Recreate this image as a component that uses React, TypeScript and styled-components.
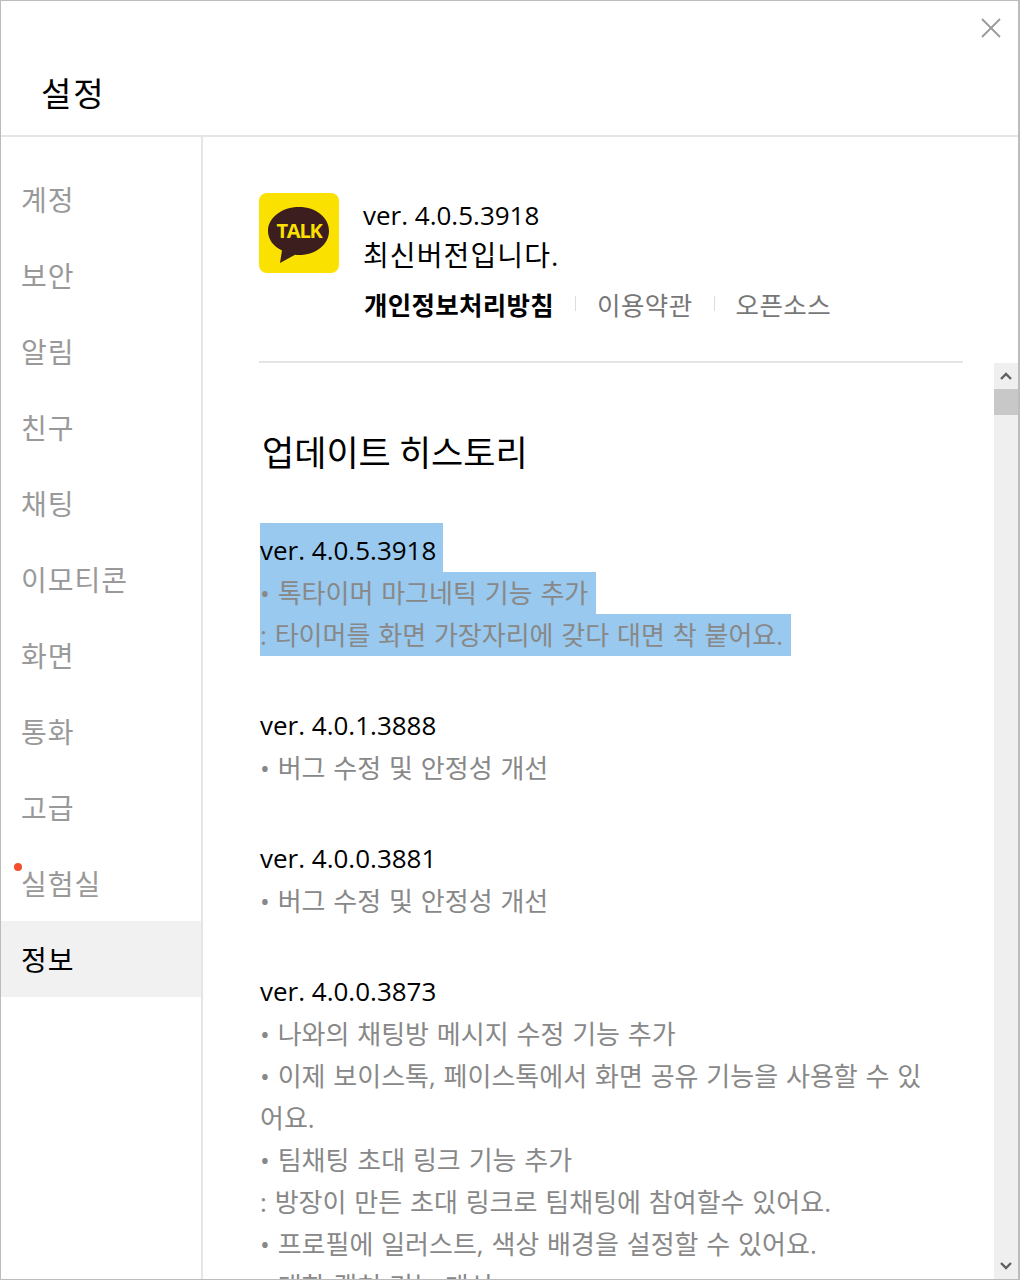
import styled, { createGlobalStyle } from "styled-components";

const menuItems = ["계정", "보안", "알림", "친구", "채팅", "이모티콘", "화면", "통화", "고급", "실험실", "정보"];

const history = [
  {
    version: "ver. 4.0.1.3888",
    lines: ["• 버그 수정 및 안정성 개선"],
  },
  {
    version: "ver. 4.0.0.3881",
    lines: ["• 버그 수정 및 안정성 개선"],
  },
  {
    version: "ver. 4.0.0.3873",
    lines: [
      "• 나와의 채팅방 메시지 수정 기능 추가",
      "• 이제 보이스톡, 페이스톡에서 화면 공유 기능을 사용할 수 있어요.",
      "• 팀채팅 초대 링크 기능 추가",
      ": 방장이 만든 초대 링크로 팀채팅에 참여할수 있어요.",
      "• 프로필에 일러스트, 색상 배경을 설정할 수 있어요.",
      "• 대화 캡처 기능 개선",
    ],
  },
];

export default function App() {
  return (
    <>
      <GlobalStyle />
      <Window>
        <Header>
          <Title>설정</Title>
          <CloseButton aria-label="닫기">
            <svg width="20" height="20" viewBox="0 0 20 20">
              <path d="M1 1 L19 19 M19 1 L1 19" stroke="#9a9a9a" strokeWidth="1.8" fill="none" />
            </svg>
          </CloseButton>
        </Header>
        <Body>
          <Sidebar>
            {menuItems.map((item) => (
              <MenuItem key={item} $active={item === "정보"}>
                {item === "실험실" && <NewDot />}
                {item}
              </MenuItem>
            ))}
          </Sidebar>
          <Main>
            <About>
              <AppIcon width="80" height="80" viewBox="0 0 80 80">
                <rect width="80" height="80" rx="8" fill="#fae100" />
                <path d="M40 14 C23 14 9 24.500 9 38 C9 46.500 14.500 53.500 23 57.500 L21 70 L36 61.800 C37.300 61.900 38.700 62 40 62 C57 62 70 51.500 70 38 C70 24.500 57 14 40 14 Z" fill="#3c1e1e" />
                <LogoText x="40" y="45" textAnchor="middle">TALK</LogoText>
              </AppIcon>
              <AboutText>
                <CurrentVersion>ver. 4.0.5.3918</CurrentVersion>
                <Latest>최신버전입니다.</Latest>
                <Links>
                  <LinkItem $strong>개인정보처리방침</LinkItem>
                  <Separator />
                  <LinkItem>이용약관</LinkItem>
                  <Separator />
                  <LinkItem>오픈소스</LinkItem>
                </Links>
              </AboutText>
            </About>
            <ScrollArea>
              <HistoryContent>
                <HistoryTitle>업데이트 히스토리</HistoryTitle>
                <SelectedBlock>
                  <SelectedVersion>
                    <Mark>ver. 4.0.5.3918&nbsp;</Mark>
                  </SelectedVersion>
                  <SelectedLine>
                    <Mark>• 톡타이머 마그네틱 기능 추가&nbsp;</Mark>
                  </SelectedLine>
                  <SelectedLine>
                    <Mark>: 타이머를 화면 가장자리에 갖다 대면 착 붙어요.&nbsp;</Mark>
                  </SelectedLine>
                </SelectedBlock>
                {history.map((entry) => (
                  <Release key={entry.version}>
                    <Version>{entry.version}</Version>
                    {entry.lines.map((line) => (
                      <Note key={line}>{line}</Note>
                    ))}
                  </Release>
                ))}
              </HistoryContent>
              <Scrollbar>
                <ScrollArrow>
                  <svg width="14" height="10" viewBox="0 0 14 10">
                    <path d="M2 8 L7 3 L12 8" stroke="#606060" strokeWidth="2.400" fill="none" />
                  </svg>
                </ScrollArrow>
                <Thumb />
                <ScrollTrack />
                <ScrollArrow>
                  <svg width="14" height="10" viewBox="0 0 14 10">
                    <path d="M2 2 L7 7 L12 2" stroke="#606060" strokeWidth="2.400" fill="none" />
                  </svg>
                </ScrollArrow>
              </Scrollbar>
            </ScrollArea>
          </Main>
        </Body>
      </Window>
    </>
  );
}

// 스타일 컴포넌트

const fontStack = `"Open Sans", "Noto Sans CJK KR", sans-serif`;

const GlobalStyle = createGlobalStyle`
  html, body {
    margin: 0;
    padding: 0;
    background: #fff;
    overflow: hidden;
  }
  * {
    box-sizing: border-box;
  }
`;

const Window = styled.div`
  display: flex;
  flex-direction: column;
  width: 1020px;
  height: 1280px;
  border: 1px solid #bcbcbc;
  border-right-width: 2px;
  font-family: ${fontStack};
  overflow: hidden;
`;

const Header = styled.header`
  position: relative;
  flex: none;
  height: 136px;
  padding: 68px 0 0 40px;
  border-bottom: 2px solid #e5e5e5;
`;

const Title = styled.h1`
  margin: 0;
  font-size: 33px;
  font-weight: 400;
  letter-spacing: 2px;
  line-height: 50px;
  color: #000;
`;

const CloseButton = styled.button`
  position: absolute;
  top: 17px;
  right: 17px;
  display: flex;
  padding: 0;
  border: none;
  background: none;
`;

const Body = styled.div`
  display: flex;
  flex: 1;
  min-height: 0;
`;

const Sidebar = styled.nav`
  flex: none;
  width: 202px;
  padding-top: 24px;
  border-right: 2px solid #e5e5e5;
`;

const MenuItem = styled.div<{ $active?: boolean }>`
  position: relative;
  height: 76px;
  padding-left: 20px;
  font-size: 28px;
  letter-spacing: 1px;
  line-height: 78px;
  color: ${(p) => (p.$active ? "#000" : "#999")};
  background: ${(p) => (p.$active ? "#f1f1f1" : "transparent")};
`;

const NewDot = styled.span`
  position: absolute;
  top: 18px;
  left: 13px;
  width: 8px;
  height: 8px;
  border-radius: 50%;
  background: #f4502f;
`;

const Main = styled.main`
  display: flex;
  flex: 1;
  flex-direction: column;
  min-width: 0;
`;

const About = styled.section`
  display: flex;
  flex: none;
  gap: 24px;
  height: 226px;
  margin: 0 55px 0 56px;
  padding-top: 56px;
  border-bottom: 2px solid #e5e5e5;
`;

const AppIcon = styled.svg`
  flex: none;
`;

const LogoText = styled.text`
  font-family: "Open Sans", sans-serif;
  font-size: 20px;
  font-weight: 700;
  letter-spacing: -1.200px;
  fill: #fae100;
`;

const AboutText = styled.div`
  display: flex;
  flex-direction: column;
`;

const CurrentVersion = styled.div`
  font-size: 26px;
  line-height: 38px;
  margin-top: 3px;
  color: #000;
`;

const Latest = styled.div`
  font-size: 28px;
  letter-spacing: 1.100px;
  line-height: 40px;
  margin-top: 1px;
  color: #000;
`;

const Links = styled.div`
  display: flex;
  align-items: center;
  gap: 21px;
  margin-top: 8px;
  height: 40px;
  padding-left: 1px;
`;

const LinkItem = styled.span<{ $strong?: boolean }>`
  font-size: 25.500px;
  font-weight: ${(p) => (p.$strong ? 700 : 400)};
  letter-spacing: ${(p) => (p.$strong ? "0.300px" : "0.400px")};
  color: ${(p) => (p.$strong ? "#000" : "#777")};
`;

const Separator = styled.span`
  width: 1px;
  height: 15px;
  background: #ddd;
`;

const ScrollArea = styled.div`
  display: flex;
  flex: 1;
  min-height: 0;
`;

const HistoryContent = styled.div`
  flex: 1;
  min-width: 0;
  padding: 64px 71px 0 57px;
  overflow: hidden;
`;

const HistoryTitle = styled.h2`
  margin: 1px 0 45px;
  padding-left: 2px;
  font-size: 35px;
  font-weight: 400;
  word-spacing: -1px;
  line-height: 50px;
  color: #000;
`;

const SelectedBlock = styled.div`
  margin-bottom: 49px;
`;

const Mark = styled.span`
  display: inline-block;
  background: #99c9ee;
`;

const SelectedVersion = styled.div`
  font-size: 26px;
  line-height: 40px;
  height: 49px;
  color: #000;
  & > span {
    padding: 7px 0 2px;
  }
`;

const SelectedLine = styled.div`
  font-size: 26px;
  word-spacing: 1.100px;
  line-height: 42px;
  height: 42px;
  color: #888;
`;

const Release = styled.div`
  margin-bottom: 49px;
`;

const Version = styled.div`
  font-size: 26px;
  line-height: 40px;
  height: 42px;
  color: #000;
`;

const Note = styled.div`
  font-size: 26px;
  word-spacing: 1.100px;
  line-height: 42px;
  color: #888;
  word-break: break-all;
`;

const Scrollbar = styled.div`
  display: flex;
  flex: none;
  flex-direction: column;
  width: 24px;
  background: #efefef;
`;

const ScrollArrow = styled.div`
  display: flex;
  flex: none;
  align-items: center;
  justify-content: center;
  height: 26px;
`;

const Thumb = styled.div`
  flex: none;
  height: 26px;
  background: #c8c8c8;
`;

const ScrollTrack = styled.div`
  flex: 1;
`;
